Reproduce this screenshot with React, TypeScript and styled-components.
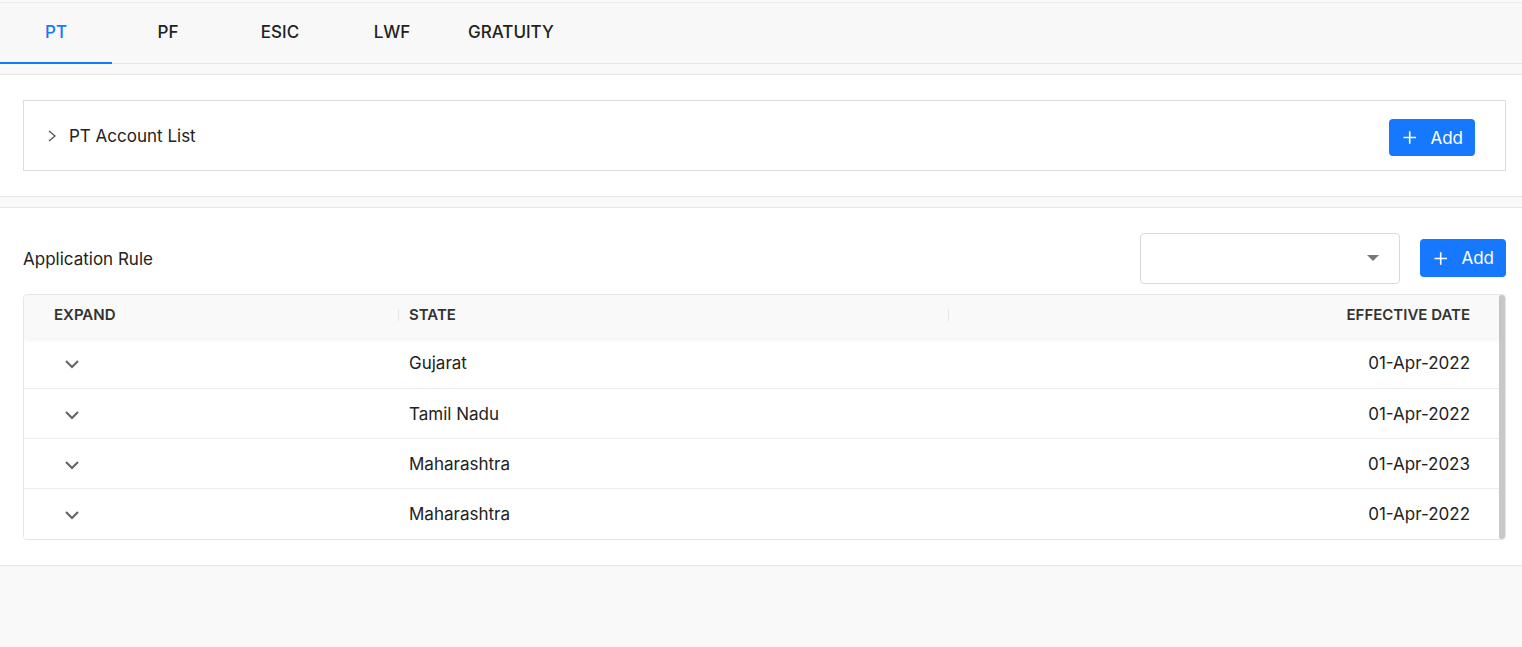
import React from "react";
import styled, { createGlobalStyle } from "styled-components";

const Global = createGlobalStyle`
  html, body { margin: 0; padding: 0; }
  body {
    background: #f9f9f9;
    font-family: Inter, "Noto Sans", Roboto, sans-serif;
    color: #222;
  }
  * { box-sizing: border-box; }
`;

const Page = styled.div`
  padding-top: 2px;
  display: flex;
  flex-direction: column;
  gap: 10px;
`;

const TabBar = styled.div`
  display: flex;
  height: 62px;
  background: #f8f8f8;
  border-top: 1px solid #ececec;
  border-bottom: 1px solid #e6e6e6;
`;

const Tab = styled.div<{ $active?: boolean }>`
  min-width: 112px;
  padding: 0 20px;
  display: flex;
  align-items: center;
  justify-content: center;
  font-family: Inter, "Noto Sans", sans-serif;
  font-weight: 500;
  font-size: 17px;
  color: ${(p) => (p.$active ? "#1677ff" : "#222")};
  border-bottom: 2px solid ${(p) => (p.$active ? "#1677ff" : "transparent")};
  margin-bottom: -1px;
  padding-bottom: 2px;
`;

const Section = styled.section`
  background: #fff;
  border-top: 1px solid #e6e6e6;
  border-bottom: 1px solid #e6e6e6;
  padding: 25px 16px 25px 23px;
`;

const Card = styled.div`
  height: 71px;
  border: 1px solid #dcdcdc;
  display: flex;
  align-items: center;
  justify-content: space-between;
  padding: 0 30px 0 23px;
`;

const CardTitle = styled.div`
  display: flex;
  align-items: center;
  gap: 12px;
  font-size: 17px;
  color: #222;
`;

const AddButton = styled.button`
  width: 86px;
  height: 37px;
  background: #1677ff;
  color: #fff;
  border: none;
  border-radius: 4px;
  display: flex;
  align-items: center;
  justify-content: center;
  gap: 14px;
  font-family: Inter, "Noto Sans", sans-serif;
  font-size: 17px;
  padding: 0 12px 0 14px;
  margin-top: 4px;
`;

const RuleHeader = styled.div`
  display: flex;
  align-items: center;
  height: 50px;
  margin-bottom: 11px;
`;

const RuleTitle = styled.div`
  flex: 1;
  font-size: 17px;
  color: #222;
  padding-top: 2px;
`;

const Select = styled.div`
  width: 260px;
  height: 51px;
  border: 1px solid #d9d9d9;
  border-radius: 4px;
  display: flex;
  align-items: center;
  justify-content: flex-end;
  padding-right: 20px;
  margin-right: 20px;
`;

const Caret = styled.span`
  width: 0;
  height: 0;
  border-left: 6px solid transparent;
  border-right: 6px solid transparent;
  border-top: 6px solid #777;
`;

const RuleAdd = styled(AddButton)`
  margin-top: 0;
  height: 38px;
`;

const Table = styled.div`
  border: 1px solid #e6e6e6;
  border-radius: 4px;
  display: flex;
  overflow: hidden;
`;

const TableBody = styled.div`
  flex: 1;
  display: flex;
  flex-direction: column;
`;

const Scrollbar = styled.div`
  width: 6px;
  background: #c8c8c8;
  border-radius: 2px;
`;

const Row = styled.div<{ $head?: boolean; $first?: boolean; $last?: boolean }>`
  display: grid;
  grid-template-columns: 374px 550px 1fr;
  height: ${(p) => (p.$head ? "43px" : p.$last ? "51px" : "50px")};
  align-items: center;
  background: ${(p) => (p.$head ? "#f9f9f9" : "#fff")};
  border-top: ${(p) => (p.$head || p.$first ? "none" : "1px solid #ececec")};
  box-shadow: ${(p) => (p.$head ? "0 2px 6px rgba(0,0,0,0.06)" : "none")};
  position: relative;
  z-index: ${(p) => (p.$head ? 1 : 0)};
`;

const HeadCell = styled.div<{ $align?: string; $pl?: number }>`
  font-size: 15px;
  font-weight: 600;
  color: #333;
  text-transform: uppercase;
  padding-left: ${(p) => p.$pl ?? 0}px;
  padding-right: ${(p) => (p.$align === "right" ? 29 : 0)}px;
  height: 100%;
  display: flex;
  align-items: center;
  justify-content: ${(p) => (p.$align === "right" ? "flex-end" : "flex-start")};
  padding-bottom: 4px;
`;

const Cell = styled.div<{ $align?: string; $pl?: number }>`
  font-size: 17px;
  color: #222;
  text-align: ${(p) => p.$align || "left"};
  padding-left: ${(p) => p.$pl ?? 0}px;
  padding-right: ${(p) => (p.$align === "right" ? 29 : 0)}px;
`;

const Sep = styled.span<{ $push?: boolean }>`
  width: 1px;
  height: 12px;
  background: #e6e6e6;
  margin-right: ${(p) => (p.$push ? "auto" : "10px")};
`;

const ChevronRight = () => (
  <svg width="10" height="14" viewBox="0 0 10 14">
    <path d="M2 2 L8 7 L2 12" fill="none" stroke="#555" strokeWidth="1.3" />
  </svg>
);

const ChevronDown = () => (
  <svg width="16" height="10" viewBox="0 0 16 10">
    <path d="M2 2 L8 8 L14 2" fill="none" stroke="#666" strokeWidth="2.2" />
  </svg>
);

const Plus = () => (
  <svg width="15" height="15" viewBox="0 0 15 15">
    <path d="M7.5 0.5 V14.5 M0.5 7.5 H14.5" stroke="#fff" strokeWidth="1.8" />
  </svg>
);

const rows = [
  { state: "Gujarat", date: "01-Apr-2022" },
  { state: "Tamil Nadu", date: "01-Apr-2022" },
  { state: "Maharashtra", date: "01-Apr-2023" },
  { state: "Maharashtra", date: "01-Apr-2022" },
];

export default function App() {
  return (
    <>
      <Global />
      <Page>
        <TabBar>
          <Tab $active>PT</Tab>
          <Tab>PF</Tab>
          <Tab>ESIC</Tab>
          <Tab>LWF</Tab>
          <Tab>GRATUITY</Tab>
        </TabBar>
        <Section>
          <Card>
            <CardTitle>
              <ChevronRight />
              PT Account List
            </CardTitle>
            <AddButton>
              <Plus />
              Add
            </AddButton>
          </Card>
        </Section>
        <Section>
          <RuleHeader>
            <RuleTitle>Application Rule</RuleTitle>
            <Select>
              <Caret />
            </Select>
            <RuleAdd>
              <Plus />
              Add
            </RuleAdd>
          </RuleHeader>
          <Table>
            <TableBody>
              <Row $head>
                <HeadCell $pl={30}>Expand</HeadCell>
                <HeadCell>
                  <Sep />
                  State
                </HeadCell>
                <HeadCell $align="right">
                  <Sep $push />
                  Effective Date
                </HeadCell>
              </Row>
              {rows.map((r, i) => (
                <Row key={i} $first={i === 0} $last={i === rows.length - 1}>
                  <Cell $pl={40}>
                    <ChevronDown />
                  </Cell>
                  <Cell $pl={11}>{r.state}</Cell>
                  <Cell $align="right">{r.date}</Cell>
                </Row>
              ))}
            </TableBody>
            <Scrollbar />
          </Table>
        </Section>
      </Page>
    </>
  );
}
